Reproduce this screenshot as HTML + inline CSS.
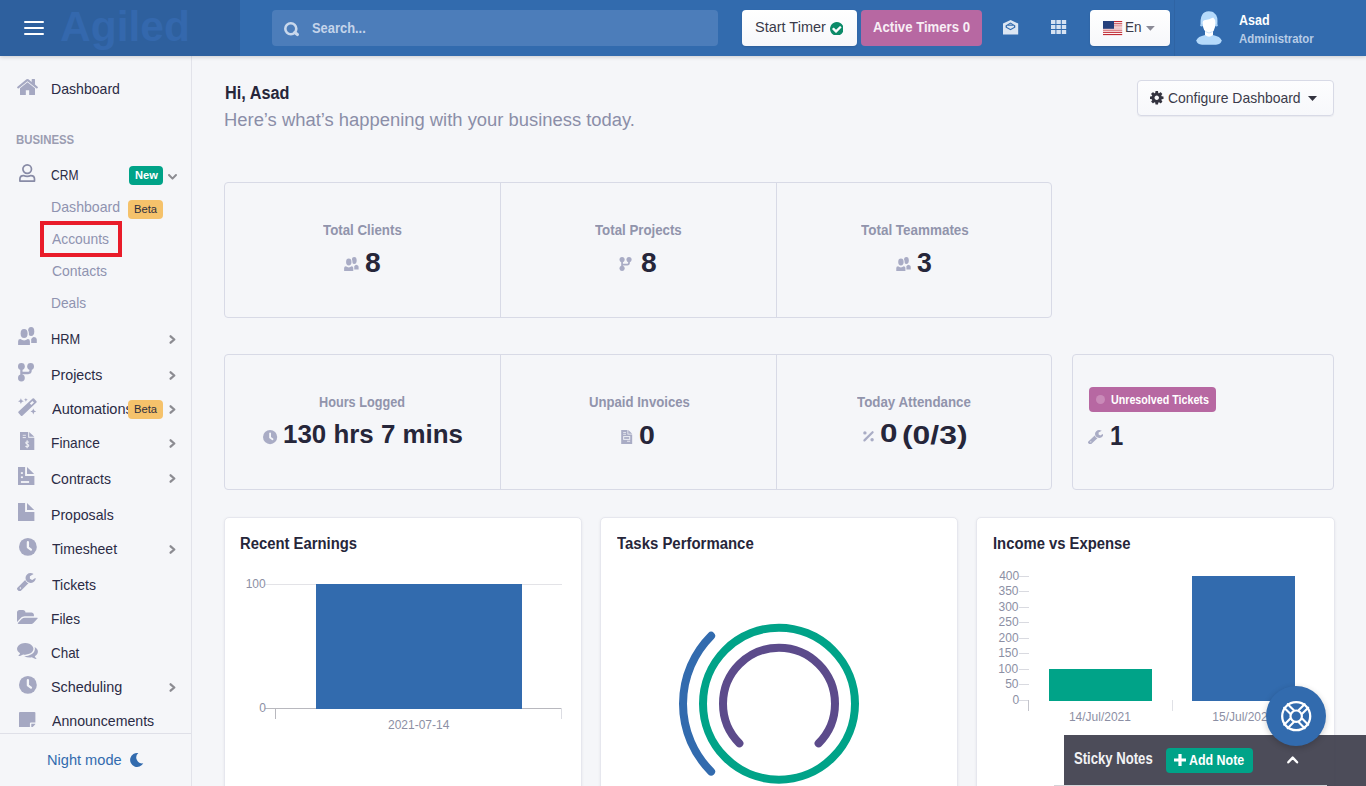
<!DOCTYPE html>
<html lang="en"><head><meta charset="utf-8"><title>Agiled - Dashboard</title>
<style>
html,body{margin:0;padding:0}
body{width:1366px;height:786px;overflow:hidden;position:relative;background:#f5f6f9;font-family:"Liberation Sans", Arial, Helvetica, sans-serif;-webkit-font-smoothing:antialiased}
svg{display:block}
span,a,h1,h2,h3,h4,strong,p,label,button{margin:0;padding:0;border:0;background:none;font-family:inherit;text-decoration:none}
</style></head><body>

<header style="position:absolute;left:0px;top:0px;width:1366px;height:56px;z-index:30;background:#326bae;box-shadow:0 1px 4px rgba(30,30,40,.2);">
<div style="position:absolute;left:0px;top:0px;width:240px;height:56px;background:#2e609e;"></div>
<div style="position:absolute;left:24px;top:21px;width:20px;height:2px;background:#fff;border-radius:1px;"></div>
<div style="position:absolute;left:24px;top:27px;width:20px;height:2px;background:#fff;border-radius:1px;"></div>
<div style="position:absolute;left:24px;top:33px;width:20px;height:2px;background:#fff;border-radius:1px;"></div>
<span id="t_Agiled_61_41" style="position:absolute;left:60.08px;top:0.10px;font-size:43px;line-height:52px;color:#3468ad;font-weight:700;white-space:nowrap;transform:scaleX(0.9894);transform-origin:0 0;">Agiled</span>
<div style="position:absolute;left:272px;top:10px;width:446px;height:36px;background:#4c7dba;border-radius:4px;"></div>
<svg style="position:absolute;left:284.3px;top:22px;overflow:visible;" width="15.5" height="14.2" viewBox="0 0 15.5 14.2"><circle cx="6.8" cy="6.8" r="5.5" fill="none" stroke="#c9d8ec" stroke-width="2.6"/><path d="M10.8 10.6L13.4 12.6" stroke="#c9d8ec" stroke-width="3.2" stroke-linecap="round"/></svg>
<span id="t_Search_312_33" style="position:absolute;left:311.94px;top:19.43px;font-size:15px;line-height:18px;color:#c4d4ea;font-weight:700;white-space:nowrap;transform:scaleX(0.8598);transform-origin:0 0;">Search...</span>
<div style="position:absolute;left:742px;top:10px;width:115px;height:36px;background:linear-gradient(#fff,#f6f7fa);border-radius:4px;box-shadow:0 1px 2px rgba(0,0,0,.12);"></div>
<span id="t_StartTimer_755_32" style="position:absolute;left:755.38px;top:18.31px;font-size:15px;line-height:18px;color:#3a3a4a;font-weight:400;white-space:nowrap;transform:scaleX(0.9661);transform-origin:0 0;">Start Timer</span>
<svg style="position:absolute;left:829.7px;top:21.6px;" width="13.7" height="13.7" viewBox="0 -1408 1536 1536" preserveAspectRatio="none"><path transform="scale(1,-1)" fill="#0b8a68" d="M1284 802q0 28 -18 46l-91 90q-19 19 -45 19t-45 -19l-408 -407l-226 226q-19 19 -45 19t-45 -19l-91 -90q-18 -18 -18 -46q0 -27 18 -45l362 -362q19 -19 45 -19q27 0 46 19l543 543q18 18 18 45zM1536 640q0 -209 -103 -385.5t-279.5 -279.5t-385.5 -103t-385.5 103 t-279.5 279.5t-103 385.5t103 385.5t279.5 279.5t385.5 103t385.5 -103t279.5 -279.5t103 -385.5z"/></svg>
<div style="position:absolute;left:861px;top:10px;width:121px;height:36px;background:#b768a2;border-radius:4px;"></div>
<span id="t_ActiveTimers_873_32" style="position:absolute;left:872.96px;top:18.04px;font-size:15px;line-height:18px;color:#f8eef5;font-weight:700;white-space:nowrap;transform:scaleX(0.8771);transform-origin:0 0;">Active Timers 0</span>
<svg style="position:absolute;left:1003px;top:19.6px;overflow:visible;" width="15.2" height="15" viewBox="0 0 15.2 15"><path d="M0 3.6L7.6 0L15.2 3.6V14.5H0Z" fill="#dce6f3"/><path d="M7.5 2.6L12.3 5.4V7.6L7.5 10.3L2.6 7.6V5.4Z" fill="#326bae"/><path d="M3.9 5.8H11V7L7.5 9L3.9 7Z" fill="#dce6f3"/><path d="M7.5 3.6L9.6 4.9H5.4Z" fill="#dce6f3" opacity=".55"/></svg>
<svg style="position:absolute;left:1051px;top:20px;overflow:visible;" width="15.2" height="14" viewBox="0 0 15.2 14"><rect x="0" y="0" width="4.4" height="4" fill="#d6e2f2"/><rect x="5.4" y="0" width="4.4" height="4" fill="#d6e2f2"/><rect x="10.8" y="0" width="4.4" height="4" fill="#d6e2f2"/><rect x="0" y="5" width="4.4" height="4" fill="#d6e2f2"/><rect x="5.4" y="5" width="4.4" height="4" fill="#d6e2f2"/><rect x="10.8" y="5" width="4.4" height="4" fill="#d6e2f2"/><rect x="0" y="10" width="4.4" height="4" fill="#d6e2f2"/><rect x="5.4" y="10" width="4.4" height="4" fill="#d6e2f2"/><rect x="10.8" y="10" width="4.4" height="4" fill="#d6e2f2"/></svg>
<div style="position:absolute;left:1090px;top:10px;width:80px;height:36px;background:linear-gradient(#fff,#f6f7fa);border-radius:4px;box-shadow:0 1px 2px rgba(0,0,0,.12);"></div>
<svg style="position:absolute;left:1102.9px;top:20.8px;overflow:visible;" width="19.2" height="14.2" viewBox="0 0 19.2 14.2"><rect width="19.2" height="14.2" fill="#fdf3f3"/><rect x="0" y="0.00" width="19.2" height="1.1" fill="#c02b35" opacity="1"/><rect x="0" y="2.17" width="19.2" height="1.1" fill="#c02b35" opacity="0.85"/><rect x="0" y="4.34" width="19.2" height="1.1" fill="#c02b35" opacity="0.6"/><rect x="0" y="6.51" width="19.2" height="1.1" fill="#c02b35" opacity="0.38"/><rect x="0" y="8.68" width="19.2" height="1.1" fill="#c02b35" opacity="0.7"/><rect x="0" y="10.85" width="19.2" height="1.1" fill="#c02b35" opacity="0.95"/><rect x="0" y="13.02" width="19.2" height="1.1" fill="#c02b35" opacity="1"/><rect width="11" height="7.8" fill="#26407c"/></svg>
<span id="t_En_1126_32" style="position:absolute;left:1124.69px;top:18.47px;font-size:15px;line-height:18px;color:#3a3a4a;font-weight:400;white-space:nowrap;transform:scaleX(0.9036);transform-origin:0 0;">En</span>
<svg style="position:absolute;left:1145.7px;top:25.8px;overflow:visible;" width="8.8" height="4.8" viewBox="0 0 8.8 4.8"><path d="M0 0H8.8L4.4 4.8Z" fill="#8a8a96"/></svg>
<div style="position:absolute;left:1174px;top:0px;width:1px;height:56px;background:#2f64a4;"></div>
<svg style="position:absolute;left:1196px;top:11px;overflow:visible;" width="26" height="34" viewBox="1196 11 26 34"><path d="M1196.3 40.6Q1197.6 36.3 1205.2 34.9H1212.8Q1220.4 36.3 1221.7 40.6Q1221 44.7 1216 44.7H1202Q1197 44.7 1196.3 40.6Z" fill="#b5dafb"/><path d="M1205 31V35.1Q1209 38.4 1213 35.1V31Z" fill="#fff"/><path d="M1200.7 26Q1199.4 11.3 1208.8 11.3Q1213 11.3 1214.6 13.6Q1218.3 15.5 1217.3 26Z" fill="#b5dafb"/><circle cx="1201.7" cy="25.2" r="1.3" fill="#a5cff5"/><circle cx="1216.3" cy="25.2" r="1.3" fill="#a5cff5"/><path d="M1202.7 22.5Q1202.7 20.6 1204.2 20.3Q1209.5 19.6 1213.2 17.5Q1215.4 19 1215.4 23Q1215.4 33 1209 33Q1202.7 33 1202.7 22.5Z" fill="#fff"/><path d="M1205.4 31.6Q1209 34.4 1212.6 31.6" fill="none" stroke="#a5cff5" stroke-width=".6"/></svg>
<span id="t_Asad_1239_25" style="position:absolute;left:1238.80px;top:10.87px;font-size:15px;line-height:18px;color:#fff;font-weight:700;white-space:nowrap;transform:scaleX(0.8349);transform-origin:0 0;">Asad</span>
<span id="t_Administrato_1239_43" style="position:absolute;left:1238.85px;top:31.44px;font-size:13.4px;line-height:16px;color:#b7cce6;font-weight:700;white-space:nowrap;transform:scaleX(0.8515);transform-origin:0 0;">Administrator</span>
</header>
<aside style="position:absolute;left:0px;top:56px;width:192px;height:730px;z-index:20;box-sizing:border-box;background:#f5f6f9;border-right:1px solid #e2e3ea;">
<nav style="position:absolute;left:0px;top:0px;width:191px;height:677px;">
<svg style="position:absolute;left:17.1px;top:22.9px;" width="21" height="16.2" viewBox="25.8889 -1283 1612.22 1283" preserveAspectRatio="none"><path transform="scale(1,-1)" fill="#a5a8c2" d="M1408 544v-480q0 -26 -19 -45t-45 -19h-384v384h-256v-384h-384q-26 0 -45 19t-19 45v480q0 1 0.5 3t0.5 3l575 474l575 -474q1 -2 1 -6zM1631 613l-62 -74q-8 -9 -21 -11h-3q-13 0 -21 7l-692 577l-692 -577q-12 -8 -24 -7q-13 2 -21 11l-62 74q-8 10 -7 23.5t11 21.5 l719 599q32 26 76 26t76 -26l244 -204v195q0 14 9 23t23 9h192q14 0 23 -9t9 -23v-408l219 -182q10 -8 11 -21.5t-7 -23.5z"/></svg>
<a id="t_Dashboard_52_94" style="position:absolute;left:50.54px;top:24.07px;font-size:15px;line-height:18px;color:#2b2b45;font-weight:400;white-space:nowrap;transform:scaleX(0.9391);transform-origin:0 0;">Dashboard</a>
<span id="t_BUSINESS_16_143" style="position:absolute;left:15.89px;top:76.55px;font-size:12.2px;line-height:15px;color:#9b9db2;font-weight:700;white-space:nowrap;transform:scaleX(0.9333);transform-origin:0 0;">BUSINESS</span>
<svg style="position:absolute;left:19.2px;top:108px;overflow:visible;" width="16.4" height="18" viewBox="0 0 16.4 18"><circle cx="8.2" cy="5.1" r="4.3" fill="none" stroke="#888ba6" stroke-width="1.7"/><path d="M0.9 17.1V15Q0.9 11.6 4.4 11.6Q8.2 13.3 12 11.6Q15.5 11.6 15.5 15V17.1Z" fill="none" stroke="#888ba6" stroke-width="1.7" stroke-linejoin="round"/></svg>
<a id="t_CRM_52_180" style="position:absolute;left:51.04px;top:110.42px;font-size:15px;line-height:18px;color:#2b2b45;font-weight:400;white-space:nowrap;transform:scaleX(0.8031);transform-origin:0 0;">CRM</a>
<div style="position:absolute;left:129px;top:110px;width:34px;height:19px;background:#00a388;border-radius:4px;"></div>
<span id="t_New_135_179" style="position:absolute;left:134.94px;top:112.20px;font-size:11.25px;line-height:14px;color:#fff;font-weight:700;white-space:nowrap;transform:scaleX(0.9880);transform-origin:0 0;">New</span>
<svg style="position:absolute;left:167.8px;top:117.6px;overflow:visible;" width="9" height="6" viewBox="0 0 9 6"><path d="M1 1L4.5 4.6L8 1" fill="none" stroke="#8c8c92" stroke-width="2" stroke-linecap="round" stroke-linejoin="round"/></svg>
<a id="t_Dashboard_52_212" style="position:absolute;left:51.13px;top:141.93px;font-size:15px;line-height:18px;color:#8f93b0;font-weight:400;white-space:nowrap;transform:scaleX(0.9424);transform-origin:0 0;">Dashboard</a>
<div style="position:absolute;left:128px;top:144.2px;width:35px;height:18.6px;background:#f5c26b;border-radius:4px;"></div>
<span id="t_Beta_134_212" style="position:absolute;left:133.95px;top:146.36px;font-size:11.25px;line-height:14px;color:#2e2e3e;font-weight:400;white-space:nowrap;transform:scaleX(0.9993);transform-origin:0 0;">Beta</span>
<div style="position:absolute;left:40px;top:165px;width:82px;height:36px;box-sizing:border-box;border:4px solid #e91c2a;"></div>
<a id="t_Accounts_52_243" style="position:absolute;left:51.57px;top:174.20px;font-size:15px;line-height:18px;color:#8f93b0;font-weight:400;white-space:nowrap;transform:scaleX(0.9241);transform-origin:0 0;">Accounts</a>
<a id="t_Contacts_52_275" style="position:absolute;left:52.15px;top:206.36px;font-size:15px;line-height:18px;color:#8f93b0;font-weight:400;white-space:nowrap;transform:scaleX(0.9309);transform-origin:0 0;">Contacts</a>
<a id="t_Deals_52_307" style="position:absolute;left:51.17px;top:237.83px;font-size:15px;line-height:18px;color:#8f93b0;font-weight:400;white-space:nowrap;transform:scaleX(0.9156);transform-origin:0 0;">Deals</a>
<svg style="position:absolute;left:17.9px;top:270.9px;overflow:visible;" width="19" height="18.2" viewBox="0 0 19 18.2"><ellipse cx="13.15" cy="4.45" rx="3.15" ry="4.45" fill="#a5a8c2"/><ellipse cx="6.1" cy="6.5" rx="4.8" ry="5.6" fill="#f5f6f9"/><ellipse cx="6.1" cy="6.5" rx="3.5" ry="4.5" fill="#a5a8c2"/><path d="M0.1 18.1V14.2Q0.1 12 2.4 12Q6.1 14.8 9.8 12Q11.9 12 11.9 14.2V18.1Z" fill="#a5a8c2"/><path d="M13.2 16V12.2Q13.6 10.6 15.6 9.9Q18.8 10.2 18.8 12.6V16Z" fill="#a5a8c2"/></svg>
<a id="t_HRM_52_343" style="position:absolute;left:51.17px;top:273.76px;font-size:15px;line-height:18px;color:#2b2b45;font-weight:400;white-space:nowrap;transform:scaleX(0.8548);transform-origin:0 0;">HRM</a>
<svg style="position:absolute;left:169px;top:278.8px;overflow:visible;" width="7" height="9" viewBox="0 0 7 9"><path d="M1.6 1.3L5.3 4.5L1.6 7.7" fill="none" stroke="#8c8c92" stroke-width="2.3" stroke-linecap="round" stroke-linejoin="round"/></svg>
<svg style="position:absolute;left:18.1px;top:306.7px;overflow:visible;" width="16" height="18.4" viewBox="0 0 16 18.4"><circle cx="3.4" cy="3.4" r="3.4" fill="#a5a8c2"/><circle cx="12.6" cy="3.4" r="3.4" fill="#a5a8c2"/><circle cx="3.4" cy="15" r="3.4" fill="#a5a8c2"/><path d="M3.4 3.4V15M12.6 3.4V7.6Q12.6 10 10.2 10H3.4" fill="none" stroke="#a5a8c2" stroke-width="2.3"/></svg>
<a id="t_Projects_52_379" style="position:absolute;left:50.53px;top:310.26px;font-size:15px;line-height:18px;color:#2b2b45;font-weight:400;white-space:nowrap;transform:scaleX(0.9481);transform-origin:0 0;">Projects</a>
<svg style="position:absolute;left:169px;top:314.6px;overflow:visible;" width="7" height="9" viewBox="0 0 7 9"><path d="M1.6 1.3L5.3 4.5L1.6 7.7" fill="none" stroke="#8c8c92" stroke-width="2.3" stroke-linecap="round" stroke-linejoin="round"/></svg>
<svg style="position:absolute;left:18.3px;top:341.8px;overflow:visible;" width="18.2" height="18.4" viewBox="0 0 18.2 18.4"><g transform="translate(9.5 9.1) rotate(-43)"><rect x="-10.6" y="-2.8" width="21.2" height="5.6" rx="1" fill="#a5a8c2"/><rect x="4.2" y="-1.1" width="3.6" height="2.2" fill="#f5f6f9"/></g><path d="M2.9 0.30000000000000027L3.77 2.33L5.8 3.2L3.77 4.07L2.9 6.1L2.03 4.07L0.0 3.2L2.03 2.33Z" fill="#a5a8c2"/><path d="M7.9 -0.09999999999999987L8.47 1.23L9.8 1.8L8.47 2.37L7.9 3.7L7.33 2.37L6.0 1.8L7.33 1.23Z" fill="#a5a8c2"/><path d="M15.3 10.6L16.17 12.63L18.2 13.5L16.17 14.37L15.3 16.4L14.430000000000001 14.37L12.4 13.5L14.430000000000001 12.63Z" fill="#a5a8c2"/></svg>
<a id="t_Automations_52_413" style="position:absolute;left:52.05px;top:344.47px;font-size:15px;line-height:18px;color:#2b2b45;font-weight:400;white-space:nowrap;transform:scaleX(0.9690);transform-origin:0 0;">Automations</a>
<svg style="position:absolute;left:169px;top:348.8px;overflow:visible;" width="7" height="9" viewBox="0 0 7 9"><path d="M1.6 1.3L5.3 4.5L1.6 7.7" fill="none" stroke="#8c8c92" stroke-width="2.3" stroke-linecap="round" stroke-linejoin="round"/></svg>
<div style="position:absolute;left:128px;top:344.2px;width:35px;height:18.7px;background:#f5c26b;border-radius:4px;"></div>
<span id="t_Beta_134_412" style="position:absolute;left:133.95px;top:346.10px;font-size:11.25px;line-height:14px;color:#2e2e3e;font-weight:400;white-space:nowrap;transform:scaleX(0.9993);transform-origin:0 0;">Beta</span>
<svg style="position:absolute;left:20.2px;top:375.9px;overflow:visible;" width="14.3" height="18.1" viewBox="0 0 14.3 18.1"><path d="M0 0H8.2V5.8H14.3V18.1H0Z" fill="#a5a8c2"/><path d="M9.2 0L14.3 4.8H9.2Z" fill="#a5a8c2"/><rect x="2.7" y="2.8" width="3.2" height="1" fill="#f5f6f9" opacity=".75"/><rect x="2.7" y="5.1" width="3.2" height="1" fill="#f5f6f9" opacity=".9"/><path d="M8.9 10.2Q7.2 9.2 6.1 10.2Q5.2 11.4 7.2 12.2Q9.3 13 8.5 14.3Q7.2 15.4 5.4 14.3M7.15 8.3V16.2" fill="none" stroke="#f5f6f9" stroke-width="1.1" opacity=".9"/></svg>
<a id="t_Finance_52_447" style="position:absolute;left:50.57px;top:378.04px;font-size:15px;line-height:18px;color:#2b2b45;font-weight:400;white-space:nowrap;transform:scaleX(0.9146);transform-origin:0 0;">Finance</a>
<svg style="position:absolute;left:169px;top:382.7px;overflow:visible;" width="7" height="9" viewBox="0 0 7 9"><path d="M1.6 1.3L5.3 4.5L1.6 7.7" fill="none" stroke="#8c8c92" stroke-width="2.3" stroke-linecap="round" stroke-linejoin="round"/></svg>
<svg style="position:absolute;left:18.1px;top:410.9px;overflow:visible;" width="16.4" height="18.1" viewBox="0 0 16.4 18.1"><path d="M0 0H7.1V9H16.4V18.1H0Z" fill="#a5a8c2"/><path d="M9 0L16.2 6.9H9Z" fill="#a5a8c2"/><rect x="2.9" y="5.2" width="2" height="1.7" fill="#f5f6f9"/><rect x="2.9" y="9.4" width="2" height="1.7" fill="#f5f6f9"/><rect x="2.9" y="14.1" width="8.2" height="1.8" fill="#f5f6f9"/></svg>
<a id="t_Contracts_52_483" style="position:absolute;left:50.79px;top:414.14px;font-size:15px;line-height:18px;color:#2b2b45;font-weight:400;white-space:nowrap;transform:scaleX(0.9339);transform-origin:0 0;">Contracts</a>
<svg style="position:absolute;left:169px;top:418.4px;overflow:visible;" width="7" height="9" viewBox="0 0 7 9"><path d="M1.6 1.3L5.3 4.5L1.6 7.7" fill="none" stroke="#8c8c92" stroke-width="2.3" stroke-linecap="round" stroke-linejoin="round"/></svg>
<svg style="position:absolute;left:18.1px;top:447px;overflow:visible;" width="16.4" height="18.1" viewBox="0 0 16.4 18.1"><path d="M0 0H7.1V9H16.4V18.1H0Z" fill="#a5a8c2"/><path d="M9 0L16.2 6.9H9Z" fill="#a5a8c2"/></svg>
<a id="t_Proposals_52_519" style="position:absolute;left:50.53px;top:450.07px;font-size:15px;line-height:18px;color:#2b2b45;font-weight:400;white-space:nowrap;transform:scaleX(0.9398);transform-origin:0 0;">Proposals</a>
<svg style="position:absolute;left:18.7px;top:482.2px;overflow:visible;" width="17.8" height="17.8" viewBox="0 0 18 18"><circle cx="9" cy="9" r="9" fill="#a5a8c2"/><path d="M9 4.2V9.4L12.1 11.7" fill="none" stroke="#f5f6f9" stroke-width="2.3" stroke-linecap="round" stroke-linejoin="round"/></svg>
<a id="t_Timesheet_52_553" style="position:absolute;left:51.87px;top:484.38px;font-size:15px;line-height:18px;color:#2b2b45;font-weight:400;white-space:nowrap;transform:scaleX(0.9369);transform-origin:0 0;">Timesheet</a>
<svg style="position:absolute;left:169px;top:488.5px;overflow:visible;" width="7" height="9" viewBox="0 0 7 9"><path d="M1.6 1.3L5.3 4.5L1.6 7.7" fill="none" stroke="#8c8c92" stroke-width="2.3" stroke-linecap="round" stroke-linejoin="round"/></svg>
<svg style="position:absolute;left:17.3px;top:517px;" width="18.7" height="18.4" viewBox="21 -1408 1641 1643" preserveAspectRatio="none"><path transform="scale(1,-1)" fill="#a5a8c2" d="M384 64q0 26 -19 45t-45 19t-45 -19t-19 -45t19 -45t45 -19t45 19t19 45zM1028 484l-682 -682q-37 -37 -90 -37q-52 0 -91 37l-106 108q-38 36 -38 90q0 53 38 91l681 681q39 -98 114.5 -173.5t173.5 -114.5zM1662 919q0 -39 -23 -106q-47 -134 -164.5 -217.5 t-258.5 -83.5q-185 0 -316.5 131.5t-131.5 316.5t131.5 316.5t316.5 131.5q58 0 121.5 -16.5t107.5 -46.5q16 -11 16 -28t-16 -28l-293 -169v-224l193 -107q5 3 79 48.5t135.5 81t70.5 35.5q15 0 23.5 -10t8.5 -25z"/></svg>
<a id="t_Tickets_52_589" style="position:absolute;left:51.89px;top:520.48px;font-size:15px;line-height:18px;color:#2b2b45;font-weight:400;white-space:nowrap;transform:scaleX(0.9365);transform-origin:0 0;">Tickets</a>
<svg style="position:absolute;left:17.1px;top:553.9px;" width="20.7" height="14" viewBox="0 -1408 1879 1408" preserveAspectRatio="none"><path transform="scale(1,-1)" fill="#a5a8c2" d="M1879 584q0 -31 -31 -66l-336 -396q-43 -51 -120.5 -86.5t-143.5 -35.5h-1088q-34 0 -60.5 13t-26.5 43q0 31 31 66l336 396q43 51 120.5 86.5t143.5 35.5h1088q34 0 60.5 -13t26.5 -43zM1536 928v-160h-832q-94 0 -197 -47.5t-164 -119.5l-337 -396l-5 -6q0 4 -0.5 12.5 t-0.5 12.5v960q0 92 66 158t158 66h320q92 0 158 -66t66 -158v-32h544q92 0 158 -66t66 -158z"/></svg>
<a id="t_Files_52_623" style="position:absolute;left:50.57px;top:554.41px;font-size:15px;line-height:18px;color:#2b2b45;font-weight:400;white-space:nowrap;transform:scaleX(0.9160);transform-origin:0 0;">Files</a>
<svg style="position:absolute;left:17.1px;top:587.1px;" width="20.9" height="16" viewBox="0 -1280 1792 1408.11" preserveAspectRatio="none"><path transform="scale(1,-1)" fill="#a5a8c2" d="M1408 768q0 -139 -94 -257t-256.5 -186.5t-353.5 -68.5q-86 0 -176 16q-124 -88 -278 -128q-36 -9 -86 -16h-3q-11 0 -20.5 8t-11.5 21q-1 3 -1 6.5t0.5 6.5t2 6l2.5 5t3.5 5.5t4 5t4.5 5t4 4.5q5 6 23 25t26 29.5t22.5 29t25 38.5t20.5 44q-124 72 -195 177t-71 224 q0 139 94 257t256.5 186.5t353.5 68.5t353.5 -68.5t256.5 -186.5t94 -257zM1792 512q0 -120 -71 -224.5t-195 -176.5q10 -24 20.5 -44t25 -38.5t22.5 -29t26 -29.5t23 -25q1 -1 4 -4.5t4.5 -5t4 -5t3.5 -5.5l2.5 -5t2 -6t0.5 -6.5t-1 -6.5q-3 -14 -13 -22t-22 -7 q-50 7 -86 16q-154 40 -278 128q-90 -16 -176 -16q-271 0 -472 132q58 -4 88 -4q161 0 309 45t264 129q125 92 192 212t67 254q0 77 -23 152q129 -71 204 -178t75 -230z"/></svg>
<a id="t_Chat_52_657" style="position:absolute;left:50.88px;top:588.44px;font-size:15px;line-height:18px;color:#2b2b45;font-weight:400;white-space:nowrap;transform:scaleX(0.8931);transform-origin:0 0;">Chat</a>
<svg style="position:absolute;left:18.7px;top:620.3px;overflow:visible;" width="17.8" height="17.8" viewBox="0 0 18 18"><circle cx="9" cy="9" r="9" fill="#a5a8c2"/><path d="M9 4.2V9.4L12.1 11.7" fill="none" stroke="#f5f6f9" stroke-width="2.3" stroke-linecap="round" stroke-linejoin="round"/></svg>
<a id="t_Scheduling_52_691" style="position:absolute;left:51.28px;top:622.38px;font-size:15px;line-height:18px;color:#2b2b45;font-weight:400;white-space:nowrap;transform:scaleX(0.9606);transform-origin:0 0;">Scheduling</a>
<svg style="position:absolute;left:169px;top:626.5px;overflow:visible;" width="7" height="9" viewBox="0 0 7 9"><path d="M1.6 1.3L5.3 4.5L1.6 7.7" fill="none" stroke="#8c8c92" stroke-width="2.3" stroke-linecap="round" stroke-linejoin="round"/></svg>
<svg style="position:absolute;left:19.2px;top:655.5px;" width="16.4" height="15.7" viewBox="0 -1408 1536 1536" preserveAspectRatio="none"><path transform="scale(1,-1)" fill="#a5a8c2" d="M1024 288v-416h-928q-40 0 -68 28t-28 68v1344q0 40 28 68t68 28h1344q40 0 68 -28t28 -68v-928h-416q-40 0 -68 -28t-28 -68zM1152 256h381q-15 -82 -65 -132l-184 -184q-50 -50 -132 -65v381z"/></svg>
<a id="t_Announcement_52_725" style="position:absolute;left:52.05px;top:655.85px;font-size:15px;line-height:18px;color:#2b2b45;font-weight:400;white-space:nowrap;transform:scaleX(0.9422);transform-origin:0 0;">Announcements</a>
</nav>
<div style="position:absolute;left:0px;top:677px;width:191px;height:1px;background:#dfe0e8;"></div>
<div style="position:absolute;left:0px;top:678px;width:191px;height:52px;background:#f5f6f9;"></div>
<a id="t_Nightmode_48_764" style="position:absolute;left:47.27px;top:695.26px;font-size:15px;line-height:18px;color:#326bae;font-weight:400;white-space:nowrap;transform:scaleX(0.9727);transform-origin:0 0;">Night mode</a>
<svg style="position:absolute;left:129.7px;top:696.7px;overflow:visible;" width="13.5" height="14.1" viewBox="0 0 13.5 14.1"><path d="M8.3 0.1A7 7 0 1 0 13.3 10.3A5.9 5.9 0 0 1 8.3 0.1Z" fill="#326bae"/></svg>
</aside>
<main style="position:absolute;left:192px;top:56px;width:1174px;height:730px;background:#f5f6f9;">
<h1 id="t_HiAsad_224_99" style="position:absolute;left:32.84px;top:25.76px;font-size:18px;line-height:22px;color:#26263a;font-weight:700;white-space:nowrap;transform:scaleX(0.9029);transform-origin:0 0;">Hi, Asad</h1>
<p id="t_Hereswhatsha_224_125" style="position:absolute;left:32.09px;top:52.99px;font-size:18px;line-height:22px;color:#8b8ea8;font-weight:400;white-space:nowrap;transform:scaleX(1.0216);transform-origin:0 0;">Here’s what’s happening with your business today.</p>
<button style="position:absolute;left:945px;top:24px;width:197px;height:36px;box-sizing:border-box;border:1px solid #d8dae6;border-radius:4px;background:linear-gradient(#fdfdfe,#f7f8fb);box-shadow:0 1px 1px rgba(50,50,93,.06);">
<svg style="position:absolute;left:12px;top:10px;" width="13.5" height="13.5" viewBox="0 -1408 1536 1536" preserveAspectRatio="none"><path transform="scale(1,-1)" fill="#33333f" d="M1024 640q0 106 -75 181t-181 75t-181 -75t-75 -181t75 -181t181 -75t181 75t75 181zM1536 749v-222q0 -12 -8 -23t-20 -13l-185 -28q-19 -54 -39 -91q35 -50 107 -138q10 -12 10 -25t-9 -23q-27 -37 -99 -108t-94 -71q-12 0 -26 9l-138 108q-44 -23 -91 -38 q-16 -136 -29 -186q-7 -28 -36 -28h-222q-14 0 -24.5 8.5t-11.5 21.5l-28 184q-49 16 -90 37l-141 -107q-10 -9 -25 -9q-14 0 -25 11q-126 114 -165 168q-7 10 -7 23q0 12 8 23q15 21 51 66.5t54 70.5q-27 50 -41 99l-183 27q-13 2 -21 12.5t-8 23.5v222q0 12 8 23t19 13 l186 28q14 46 39 92q-40 57 -107 138q-10 12 -10 24q0 10 9 23q26 36 98.5 107.5t94.5 71.5q13 0 26 -10l138 -107q44 23 91 38q16 136 29 186q7 28 36 28h222q14 0 24.5 -8.5t11.5 -21.5l28 -184q49 -16 90 -37l142 107q9 9 24 9q13 0 25 -10q129 -119 165 -170q7 -8 7 -22 q0 -12 -8 -23q-15 -21 -51 -66.5t-54 -70.5q26 -50 41 -98l183 -28q13 -2 21 -12.5t8 -23.5z"/></svg>
<span id="t_ConfigureDas_1168_103" style="position:absolute;left:29.89px;top:7.95px;font-size:15px;line-height:18px;color:#3a3a4a;font-weight:400;white-space:nowrap;transform:scaleX(0.9297);transform-origin:0 0;">Configure Dashboard</span>
<svg style="position:absolute;left:170px;top:15px;overflow:visible;" width="9" height="5" viewBox="0 0 9 5"><path d="M0 0H9L4.5 5Z" fill="#33333f"/></svg>
</button>
<section style="position:absolute;left:32px;top:126px;width:828px;height:136px;box-sizing:border-box;border:1px solid #d8dae6;border-radius:4px;">
<div style="position:absolute;left:275px;top:-1px;width:1px;height:136px;background:#d8dae6;"></div>
<div style="position:absolute;left:551px;top:-1px;width:1px;height:136px;background:#d8dae6;"></div>
<article style="position:absolute;left:0px;top:0px;width:275px;height:134px;">
<h4 id="t_TotalClients_323_235" style="position:absolute;left:98.36px;top:38.08px;font-size:15px;line-height:18px;color:#9194ac;font-weight:700;white-space:nowrap;transform:scaleX(0.8867);transform-origin:0 0;">Total Clients</h4>
<svg style="position:absolute;left:118.7px;top:74px;overflow:visible;" width="14.8" height="14.1" viewBox="0 0 19 18.2"><ellipse cx="13.15" cy="4.45" rx="3.15" ry="4.45" fill="#a9acc5"/><ellipse cx="6.1" cy="6.5" rx="4.8" ry="5.6" fill="#f5f6f9"/><ellipse cx="6.1" cy="6.5" rx="3.5" ry="4.5" fill="#a9acc5"/><path d="M0.1 18.1V14.2Q0.1 12 2.4 12Q6.1 14.8 9.8 12Q11.9 12 11.9 14.2V18.1Z" fill="#a9acc5"/><path d="M13.2 16V12.2Q13.6 10.6 15.6 9.9Q18.8 10.2 18.8 12.6V16Z" fill="#a9acc5"/></svg>
<strong id="t_8_365_271" style="position:absolute;left:140.44px;top:63.11px;font-size:27.4px;line-height:33px;color:#26263a;font-weight:700;white-space:nowrap;transform:scaleX(1.0331);transform-origin:0 0;">8</strong>
</article>
<article style="position:absolute;left:276px;top:0px;width:275px;height:134px;">
<h4 id="t_TotalProject_595_235" style="position:absolute;left:94.36px;top:38.08px;font-size:15px;line-height:18px;color:#9194ac;font-weight:700;white-space:nowrap;transform:scaleX(0.8845);transform-origin:0 0;">Total Projects</h4>
<svg style="position:absolute;left:118.3px;top:74.2px;overflow:visible;" width="13.1" height="13.9" viewBox="0 0 16 18.4"><circle cx="3.4" cy="3.4" r="3.4" fill="#a9acc5"/><circle cx="12.6" cy="3.4" r="3.4" fill="#a9acc5"/><circle cx="3.4" cy="15" r="3.4" fill="#a9acc5"/><path d="M3.4 3.4V15M12.6 3.4V7.6Q12.6 10 10.2 10H3.4" fill="none" stroke="#a9acc5" stroke-width="2.3"/></svg>
<strong id="t_8_641_271" style="position:absolute;left:140.40px;top:63.11px;font-size:27.4px;line-height:33px;color:#26263a;font-weight:700;white-space:nowrap;transform:scaleX(1.0292);transform-origin:0 0;">8</strong>
</article>
<article style="position:absolute;left:552px;top:0px;width:274px;height:134px;">
<h4 id="t_TotalTeammat_860_235" style="position:absolute;left:83.76px;top:38.10px;font-size:15px;line-height:18px;color:#9194ac;font-weight:700;white-space:nowrap;transform:scaleX(0.8962);transform-origin:0 0;">Total Teammates</h4>
<svg style="position:absolute;left:118.9px;top:74px;overflow:visible;" width="15.1" height="14.1" viewBox="0 0 19 18.2"><ellipse cx="13.15" cy="4.45" rx="3.15" ry="4.45" fill="#a9acc5"/><ellipse cx="6.1" cy="6.5" rx="4.8" ry="5.6" fill="#f5f6f9"/><ellipse cx="6.1" cy="6.5" rx="3.5" ry="4.5" fill="#a9acc5"/><path d="M0.1 18.1V14.2Q0.1 12 2.4 12Q6.1 14.8 9.8 12Q11.9 12 11.9 14.2V18.1Z" fill="#a9acc5"/><path d="M13.2 16V12.2Q13.6 10.6 15.6 9.9Q18.8 10.2 18.8 12.6V16Z" fill="#a9acc5"/></svg>
<strong id="t_3_917_271" style="position:absolute;left:140.24px;top:63.11px;font-size:27.4px;line-height:33px;color:#26263a;font-weight:700;white-space:nowrap;transform:scaleX(0.9732);transform-origin:0 0;">3</strong>
</article>
</section>
<section style="position:absolute;left:32px;top:298px;width:828px;height:136px;box-sizing:border-box;border:1px solid #d8dae6;border-radius:4px;">
<div style="position:absolute;left:275px;top:-1px;width:1px;height:136px;background:#d8dae6;"></div>
<div style="position:absolute;left:551px;top:-1px;width:1px;height:136px;background:#d8dae6;"></div>
<article style="position:absolute;left:0px;top:0px;width:275px;height:134px;">
<h4 id="t_HoursLogged_319_407" style="position:absolute;left:94.46px;top:38.23px;font-size:15px;line-height:18px;color:#9194ac;font-weight:700;white-space:nowrap;transform:scaleX(0.8460);transform-origin:0 0;">Hours Logged</h4>
<svg style="position:absolute;left:37.9px;top:74.8px;overflow:visible;" width="14.2" height="14.2" viewBox="0 0 18 18"><circle cx="9" cy="9" r="9" fill="#a9acc5"/><path d="M9 4.2V9.4L12.1 11.7" fill="none" stroke="#f5f6f9" stroke-width="2.3" stroke-linecap="round" stroke-linejoin="round"/></svg>
<strong id="t_130hrs7mins_284_443" style="position:absolute;left:57.88px;top:63.25px;font-size:26.4px;line-height:32px;color:#26263a;font-weight:700;white-space:nowrap;transform:scaleX(0.9813);transform-origin:0 0;">130 hrs 7 mins</strong>
</article>
<article style="position:absolute;left:276px;top:0px;width:275px;height:134px;">
<h4 id="t_UnpaidInvoic_588_407" style="position:absolute;left:87.99px;top:38.07px;font-size:15px;line-height:18px;color:#9194ac;font-weight:700;white-space:nowrap;transform:scaleX(0.8766);transform-origin:0 0;">Unpaid Invoices</h4>
<svg style="position:absolute;left:120px;top:75px;overflow:visible;" width="11.4" height="13.9" viewBox="0 0 14.3 18.1"><path d="M0 0H8.2V5.8H14.3V18.1H0Z" fill="#a9acc5"/><path d="M9.2 0L14.3 4.8H9.2Z" fill="#a9acc5"/><rect x="2.6" y="2.6" width="3.6" height="1.2" fill="#f5f6f9" opacity=".8"/><rect x="2.6" y="5" width="3.6" height="1.2" fill="#f5f6f9" opacity=".8"/><rect x="3.2" y="8.6" width="7.9" height="3.6" fill="none" stroke="#f5f6f9" stroke-width="1.3" opacity=".9"/><rect x="7.6" y="14" width="4" height="1.3" fill="#f5f6f9" opacity=".85"/></svg>
<strong id="t_0_639_443" style="position:absolute;left:137.88px;top:64.05px;font-size:26.4px;line-height:32px;color:#26263a;font-weight:700;white-space:nowrap;transform:scaleX(1.0793);transform-origin:0 0;">0</strong>
</article>
<article style="position:absolute;left:552px;top:0px;width:274px;height:134px;">
<h4 id="t_TodayAttenda_857_407" style="position:absolute;left:79.96px;top:38.08px;font-size:15px;line-height:18px;color:#9194ac;font-weight:700;white-space:nowrap;transform:scaleX(0.8873);transform-origin:0 0;">Today Attendance</h4>
<svg style="position:absolute;left:85.8px;top:76.3px;overflow:visible;" width="11" height="10.6" viewBox="0 0 11 10.6"><circle cx="1.9" cy="1.9" r="1.7" fill="#a9acc5"/><circle cx="9.1" cy="8.7" r="1.7" fill="#a9acc5"/><path d="M9.6 1.2L1.4 9.4" stroke="#a9acc5" stroke-width="2.2" stroke-linecap="round"/></svg>
<strong id="t_0_880_441" style="position:absolute;left:102.89px;top:62.83px;font-size:25.6px;line-height:31px;color:#26263a;font-weight:700;white-space:nowrap;transform:scaleX(1.2275);transform-origin:0 0;">0</strong>
<strong id="t_03_903_444" style="position:absolute;left:125.03px;top:64.05px;font-size:26.4px;line-height:32px;color:#26263a;font-weight:700;white-space:nowrap;transform:scaleX(1.2074);transform-origin:0 0;">(0/3)</strong>
</article>
</section>
<section style="position:absolute;left:880px;top:298px;width:262px;height:136px;box-sizing:border-box;border:1px solid #d8dae6;border-radius:4px;">
<div style="position:absolute;left:16px;top:32px;width:127px;height:25px;background:#b768a2;border-radius:4px;"></div>
<div style="position:absolute;left:23.2px;top:40px;width:9px;height:9px;background:#c98ab8;border-radius:50%;"></div>
<span id="t_UnresolvedTi_1111_404" style="position:absolute;left:38.48px;top:37.72px;font-size:12px;line-height:14px;color:#fff;font-weight:700;white-space:nowrap;transform:scaleX(0.8912);transform-origin:0 0;">Unresolved Tickets</span>
<svg style="position:absolute;left:14.9px;top:74.8px;" width="15.4" height="14.5" viewBox="21 -1408 1641 1643" preserveAspectRatio="none"><path transform="scale(1,-1)" fill="#a9acc5" d="M384 64q0 26 -19 45t-45 19t-45 -19t-19 -45t19 -45t45 -19t45 19t19 45zM1028 484l-682 -682q-37 -37 -90 -37q-52 0 -91 37l-106 108q-38 36 -38 90q0 53 38 91l681 681q39 -98 114.5 -173.5t173.5 -114.5zM1662 919q0 -39 -23 -106q-47 -134 -164.5 -217.5 t-258.5 -83.5q-185 0 -316.5 131.5t-131.5 316.5t131.5 316.5t316.5 131.5q58 0 121.5 -16.5t107.5 -46.5q16 -11 16 -28t-16 -28l-293 -169v-224l193 -107q5 3 79 48.5t135.5 81t70.5 35.5q15 0 23.5 -10t8.5 -25z"/></svg>
<strong id="t_1_1111_445" style="position:absolute;left:36.97px;top:64.30px;font-size:28px;line-height:34px;color:#26263a;font-weight:700;white-space:nowrap;transform:scaleX(0.8501);transform-origin:0 0;">1</strong>
</section>
<section style="position:absolute;left:32px;top:461px;width:358px;height:300px;box-sizing:border-box;background:#fff;border:1px solid #e6e7ee;border-radius:5px;box-shadow:0 1px 3px rgba(50,50,93,.08);">
<h3 id="t_RecentEarnin_240_549" style="position:absolute;left:14.84px;top:15.97px;font-size:16px;line-height:19px;color:#26263a;font-weight:700;white-space:nowrap;transform:scaleX(0.9267);transform-origin:0 0;">Recent Earnings</h3>
<div style="position:absolute;left:40px;top:66px;width:297px;height:1px;background:#e3e3e7;"></div>
<div style="position:absolute;left:40px;top:190px;width:297px;height:1px;background:#b8b8be;"></div>
<div style="position:absolute;left:50px;top:190px;width:1px;height:11px;background:#b8b8be;"></div>
<div style="position:absolute;left:336px;top:190px;width:1px;height:11px;background:#dcdde3;"></div>
<div style="position:absolute;left:91px;top:66px;width:206px;height:124.5px;background:#326bae;"></div>
<span id="t_100_246_588" style="position:absolute;left:20.67px;top:59.32px;font-size:12px;line-height:14px;color:#8c8fa4;font-weight:400;white-space:nowrap;">100</span>
<span id="t_0_259_711" style="position:absolute;left:34.30px;top:183.05px;font-size:12px;line-height:14px;color:#8c8fa4;font-weight:400;white-space:nowrap;">0</span>
<span id="t_20210714_388_728" style="position:absolute;left:162.96px;top:199.90px;font-size:12px;line-height:14px;color:#8c8fa4;font-weight:400;white-space:nowrap;">2021-07-14</span>
</section>
<section style="position:absolute;left:408px;top:461px;width:358px;height:300px;box-sizing:border-box;background:#fff;border:1px solid #e6e7ee;border-radius:5px;box-shadow:0 1px 3px rgba(50,50,93,.08);">
<h3 id="t_TasksPerform_617_549" style="position:absolute;left:15.71px;top:15.99px;font-size:16px;line-height:19px;color:#26263a;font-weight:700;white-space:nowrap;transform:scaleX(0.9336);transform-origin:0 0;">Tasks Performance</h3>
<svg style="position:absolute;left:0px;top:0px;overflow:visible;" width="356" height="268" viewBox="601 518 356 268"><path d="M711.12 771.58A96 96 0 0 1 711.12 635.82" fill="none" stroke="#326bae" stroke-width="8" stroke-linecap="round"/><circle cx="779" cy="703.7" r="76" fill="none" stroke="#00a388" stroke-width="8"/><path d="M739.40 743.30A56 56 0 1 1 818.60 743.30" fill="none" stroke="#5c4b8b" stroke-width="8" stroke-linecap="round"/></svg>
</section>
<section style="position:absolute;left:784px;top:461px;width:359px;height:300px;box-sizing:border-box;background:#fff;border:1px solid #e6e7ee;border-radius:5px;box-shadow:0 1px 3px rgba(50,50,93,.08);">
<h3 id="t_IncomevsExpe_993_549" style="position:absolute;left:16.20px;top:15.96px;font-size:16px;line-height:19px;color:#26263a;font-weight:700;white-space:nowrap;transform:scaleX(0.9263);transform-origin:0 0;">Income vs Expense</h3>
<div style="position:absolute;left:42px;top:182px;width:10px;height:1px;background:#d9dae0;"></div>
<span id="t_0_1012_703" style="position:absolute;left:35.53px;top:174.64px;font-size:12px;line-height:14px;color:#8c8fa4;font-weight:400;white-space:nowrap;">0</span>
<div style="position:absolute;left:42px;top:166px;width:10px;height:1px;background:#d9dae0;"></div>
<span id="t_50_1005_688" style="position:absolute;left:28.20px;top:159.14px;font-size:12px;line-height:14px;color:#8c8fa4;font-weight:400;white-space:nowrap;">50</span>
<div style="position:absolute;left:42px;top:151px;width:10px;height:1px;background:#d9dae0;"></div>
<span id="t_100_999_672" style="position:absolute;left:21.13px;top:143.64px;font-size:12px;line-height:14px;color:#8c8fa4;font-weight:400;white-space:nowrap;">100</span>
<div style="position:absolute;left:42px;top:135px;width:10px;height:1px;background:#d9dae0;"></div>
<span id="t_150_999_657" style="position:absolute;left:21.13px;top:128.14px;font-size:12px;line-height:14px;color:#8c8fa4;font-weight:400;white-space:nowrap;">150</span>
<div style="position:absolute;left:42px;top:120px;width:10px;height:1px;background:#d9dae0;"></div>
<span id="t_200_999_641" style="position:absolute;left:21.55px;top:112.64px;font-size:12px;line-height:14px;color:#8c8fa4;font-weight:400;white-space:nowrap;">200</span>
<div style="position:absolute;left:42px;top:104px;width:10px;height:1px;background:#d9dae0;"></div>
<span id="t_250_999_626" style="position:absolute;left:21.55px;top:97.14px;font-size:12px;line-height:14px;color:#8c8fa4;font-weight:400;white-space:nowrap;">250</span>
<div style="position:absolute;left:42px;top:89px;width:10px;height:1px;background:#d9dae0;"></div>
<span id="t_300_999_610" style="position:absolute;left:21.53px;top:81.64px;font-size:12px;line-height:14px;color:#8c8fa4;font-weight:400;white-space:nowrap;">300</span>
<div style="position:absolute;left:42px;top:73px;width:10px;height:1px;background:#d9dae0;"></div>
<span id="t_350_999_595" style="position:absolute;left:21.53px;top:66.14px;font-size:12px;line-height:14px;color:#8c8fa4;font-weight:400;white-space:nowrap;">350</span>
<div style="position:absolute;left:42px;top:58px;width:10px;height:1px;background:#d9dae0;"></div>
<span id="t_400_999_579" style="position:absolute;left:22.19px;top:50.64px;font-size:12px;line-height:14px;color:#8c8fa4;font-weight:400;white-space:nowrap;">400</span>
<div style="position:absolute;left:51px;top:182px;width:1px;height:11px;background:#c4c5cc;"></div>
<div style="position:absolute;left:195px;top:182px;width:1px;height:11px;background:#e0e1e6;"></div>
<div style="position:absolute;left:72px;top:151px;width:103px;height:32px;background:#00a388;"></div>
<div style="position:absolute;left:215px;top:58px;width:103px;height:125px;background:#326bae;"></div>
<span id="t_14Jul2021_1070_721" style="position:absolute;left:91.90px;top:192.26px;font-size:12px;line-height:14px;color:#8c8fa4;font-weight:400;white-space:nowrap;">14/Jul/2021</span>
<span id="t_15Jul2021_1213_721" style="position:absolute;left:235.31px;top:192.25px;font-size:12px;line-height:14px;color:#8c8fa4;font-weight:400;white-space:nowrap;">15/Jul/2021</span>
</section>
</main>
<div style="position:absolute;left:1064px;top:735px;width:302px;height:51px;z-index:40;background:rgba(62,62,76,.93);">
<span id="t_StickyNotes_1074_764" style="position:absolute;left:9.94px;top:14.38px;font-size:17px;line-height:20px;color:#f2f2f4;font-weight:700;white-space:nowrap;transform:scaleX(0.7713);transform-origin:0 0;">Sticky Notes</span>
<div style="position:absolute;left:102px;top:13px;width:87px;height:25px;background:#00a388;border-radius:4px;"></div>
<svg style="position:absolute;left:110px;top:19px;overflow:visible;" width="12" height="12" viewBox="0 0 12 12"><path d="M6 0V12M0 6H12" stroke="#fff" stroke-width="3.2"/></svg>
<span id="t_AddNote_1189_765" style="position:absolute;left:125.29px;top:16.60px;font-size:14.4px;line-height:17px;color:#fff;font-weight:700;white-space:nowrap;transform:scaleX(0.8640);transform-origin:0 0;">Add Note</span>
<svg style="position:absolute;left:223.4px;top:21px;overflow:visible;" width="11.4" height="7.6" viewBox="0 0 11.4 7.6"><path d="M1.3 6.3L5.7 1.6L10.1 6.3" fill="none" stroke="#fff" stroke-width="2.4" stroke-linecap="round" stroke-linejoin="round"/></svg>
</div>
<div style="position:absolute;left:1054px;top:785px;width:273px;height:1px;z-index:41;background:#d4d4d8;"></div>
<div style="position:absolute;left:1266px;top:686px;width:60px;height:60px;z-index:42;background:#326bae;border-radius:50%;box-shadow:0 2px 6px rgba(0,0,0,.2);"></div>
<svg style="position:absolute;left:1280.9px;top:700.5px;overflow:visible;z-index:43;" width="30.4" height="30.4" viewBox="0 0 30.4 30.4"><g transform="translate(15.2 15.2)" fill="none" stroke="#fff"><circle r="14" stroke-width="2.3"/><circle r="5.7" stroke-width="2.2"/><path transform="rotate(45)" d="M5.8 -2.5H14.5M5.8 2.5H14.5" stroke-width="2.1" stroke-linecap="round"/><path transform="rotate(135)" d="M5.8 -2.5H14.5M5.8 2.5H14.5" stroke-width="2.1" stroke-linecap="round"/><path transform="rotate(225)" d="M5.8 -2.5H14.5M5.8 2.5H14.5" stroke-width="2.1" stroke-linecap="round"/><path transform="rotate(315)" d="M5.8 -2.5H14.5M5.8 2.5H14.5" stroke-width="2.1" stroke-linecap="round"/></g></svg>

</body></html>
